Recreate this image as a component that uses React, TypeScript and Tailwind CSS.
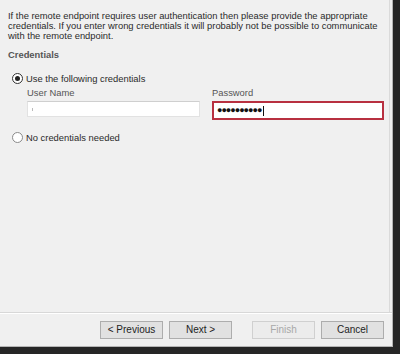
import React from "react";

function Radio({ checked }: { checked: boolean }) {
  return (
    <span
      className={`flex h-[11px] w-[11px] shrink-0 items-center justify-center rounded-full border bg-white ${
        checked ? "border-[#333]" : "border-[#8a8a8a]"
      }`}
    >
      {checked && <span className="h-[5px] w-[5px] rounded-full bg-[#222]" />}
    </span>
  );
}

function Btn({ label, disabled }: { label: string; disabled?: boolean }) {
  return (
    <div
      className={`flex h-[18px] w-[63px] items-center justify-center border text-[10px] leading-none ${
        disabled
          ? "border-[#d0d0d0] bg-[#ececec] text-[#a8a8a8]"
          : "border-[#adadad] bg-[#e1e1e1] text-[#1e1e1e]"
      }`}
    >
      {label}
    </div>
  );
}

export default function App() {
  return (
    <div
      className="flex h-[354px] w-[400px] flex-col bg-[#262626]"
      style={{ fontFamily: '"Liberation Sans", Arial, sans-serif' }}
    >
      <div className="flex h-[347px] w-[393px] flex-col border-b border-r border-[#b5b5b5] bg-[#f0f0f0]">
        <div className="mr-[2px] flex flex-1 flex-col border-r border-[#dadada] pl-[8px] pt-[11px]">
          <p className="w-[378px] text-[9.4px] leading-[10px] text-[#2a2a2a]">
            If the remote endpoint requires user authentication then please provide the appropriate
            credentials. If you enter wrong credentials it will probably not be possible to communicate
            with the remote endpoint.
          </p>
          <div className="mt-[9px] text-[9.4px] font-bold leading-[10px] text-[#555]">Credentials</div>

          <div className="mt-[13px] flex items-center gap-[3px] pl-[4px]">
            <Radio checked />
            <span className="text-[9.4px] leading-[10px] text-[#2a2a2a]">Use the following credentials</span>
          </div>

          <div className="mt-[4px] flex gap-[12px] pl-[19px]">
            <div className="flex w-[173px] flex-col">
              <span className="text-[9.4px] leading-[10px] text-[#555]">User Name</span>
              <div className="mt-[3px] flex h-[16px] items-center border border-[#e2e2e2] border-t-[#cfcfcf] bg-white pl-[4px]">
                <span className="h-[3px] w-px bg-[#bbb]" />
              </div>
            </div>
            <div className="flex w-[172px] flex-col">
              <span className="text-[9.4px] leading-[10px] text-[#555]">Password</span>
              <div className="mt-[3px] flex h-[19px] items-center border-2 border-[#b83040] bg-white pl-[3px]">
                <span className="text-[9px] leading-none tracking-[-1px] text-[#111]">●●●●●●●●●●</span>
                <span className="ml-[2px] h-[10px] w-px bg-[#111]" />
              </div>
            </div>
          </div>

          <div className="mt-[12px] flex items-center gap-[3px] pl-[4px]">
            <Radio checked={false} />
            <span className="text-[9.4px] leading-[10px] text-[#2a2a2a]">No credentials needed</span>
          </div>
        </div>

        <div className="flex h-[34px] items-center justify-end border-t border-[#d8d8d8] pr-[8px] shadow-[inset_0_1px_0_#fff]">
          <div className="flex items-center gap-[6px]">
            <Btn label="< Previous" />
            <Btn label="Next >" />
          </div>
          <div className="ml-[20px] flex items-center gap-[6px]">
            <Btn label="Finish" disabled />
            <Btn label="Cancel" />
          </div>
        </div>
      </div>
    </div>
  );
}
